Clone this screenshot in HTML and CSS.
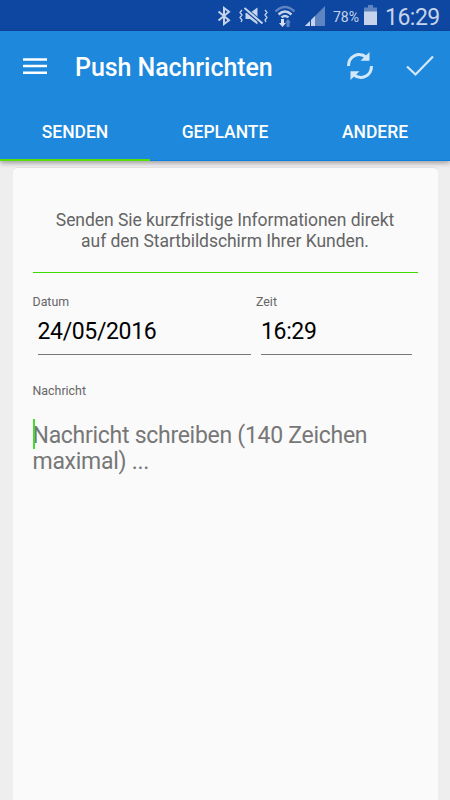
FILE: index.html
```html
<!DOCTYPE html>
<html lang="de">
<head>
<meta charset="utf-8">
<title>Push Nachrichten</title>
<link rel="stylesheet" href="styles.css">
</head>
<body>
<div class="status">
  <svg class="bluetooth" width="14" height="20" viewBox="0 0 14 20"><path d="M1.500 5.500 12 14.200 7 18V2l5 3.800L1.500 14.500" fill="none" stroke="#c6d3ea" stroke-width="2"/></svg>
  <svg class="mute" width="29" height="20" viewBox="0 0 29 20"><path d="M6.500 7h4.500l7.500-5.500v17L11 13H6.500z" fill="#c6d3ea"/><path d="m5 2 19 16" stroke="#0d47a1" stroke-width="4"/><path d="m5.500 2 18 15.500" stroke="#c6d3ea" stroke-width="2"/><path d="M3 4 1 6.500 3 9l-2 2.500L3 14l-1 2M26 4l2 2.500L26 9l2 2.500-2 2.500 1 2" fill="none" stroke="#c6d3ea" stroke-width="1.300"/></svg>
  <svg class="wifi" width="22" height="23" viewBox="0 0 22 23"><path d="M1.500 6.500q9.500-9 19 0" fill="none" stroke="#5e85c1" stroke-width="2.400"/><path d="M4.500 9.500q6.500-6 13 0M7.500 12.400q3.500-3 7 0" fill="none" stroke="#c6d3ea" stroke-width="2.400"/><path d="M7 14h3v4h2l-3.500 4L5 18h2z" fill="#d7e0f0"/><path d="M11 17.500 14 14l3 3.500h-1.500V22h-3v-4.500z" fill="#5e85c1"/></svg>
  <svg class="signal" width="20" height="20" viewBox="0 0 20 20"><path d="M0 20 20 0v20z" fill="#5e85c1"/><path d="M0 20 10 10v10z" fill="#c6d3ea"/><path d="M5.500 14v6" stroke="#0d47a1" stroke-width="1"/></svg>
  <span class="percent">78%</span>
  <svg class="battery" width="13" height="20" viewBox="0 0 13 20"><path d="M4 0h5v2.500h4V7H0V2.500h4z" fill="#5e85c1"/><path d="M0 6.500h13V20H0z" fill="#c6d3ea"/></svg>
  <span class="clock">16:29</span>
</div>
<header class="appbar">
  <div class="toolbar">
    <svg class="menu" width="24" height="16" viewBox="0 0 24 16"><path d="M0 1.500h24M0 8h24M0 14.700h24" stroke="#fff" stroke-width="2.400"/></svg>
    <h1 class="title">Push Nachrichten</h1>
    <svg class="sync" width="26" height="28" viewBox="0 0 26 28"><path d="M1.500 14C1.500 4 12 -1 19.500 5.500M24.500 14c0 10-10.500 15-18 8.500" fill="none" stroke="#d2e7f8" stroke-width="3"/><path d="M22.500 0v8.700h-9zM3.500 28v-8.700h9z" fill="#d2e7f8"/></svg>
    <svg class="check" width="28" height="22" viewBox="0 0 28 22"><path d="m1 11.500 8.500 8L27 1.500" fill="none" stroke="#d2e7f8" stroke-width="2.300"/></svg>
  </div>
  <nav class="tabs">
    <div class="tab active">SENDEN</div>
    <div class="tab">GEPLANTE</div>
    <div class="tab">ANDERE</div>
  </nav>
</header>
<main class="card">
  <p class="intro">Senden Sie kurzfristige Informationen direkt<br>auf den Startbildschirm Ihrer Kunden.</p>
  <div class="when">
    <div class="field date"><div class="label">Datum</div><div class="value">24/05/2016</div></div>
    <div class="field time"><div class="label">Zeit</div><div class="value">16:29</div></div>
  </div>
  <div class="label">Nachricht</div>
  <div class="message">Nachricht schreiben (140 Zeichen<br>maximal) ...</div>
</main>
</body>
</html>
```
FILE: styles.css
```css
* { box-sizing: border-box; }
body {
  margin: 0;
  height: 800px;
  overflow: hidden;
  display: flex;
  flex-direction: column;
  background: #eee;
  font-family: Roboto, sans-serif;
}
svg { display: block; flex: none; }
.status {
  flex: none;
  height: 31px;
  display: flex;
  align-items: flex-start;
  padding: 5px 0 0 217px;
  background: #0d47a1;
  color: #c6d3ea;
}
.bluetooth { margin-top: 1px; }
.mute { margin: 1px 0 0 8px; }
.wifi { margin-left: 6px; }
.signal { margin: 1px 0 0 9px; }
.percent { width: 31px; margin-left: 8px; font-size: 14px; line-height: 24px; }
.clock { margin-left: 8px; font-size: 23px; line-height: 25px; letter-spacing: -.5px; }
.appbar {
  flex: none;
  position: relative;
  height: 130px;
  background: #1e88dc;
  color: #fff;
  box-shadow: 0 2px 5px rgba(0, 0, 0, .35);
}
.toolbar { height: 70px; display: flex; align-items: center; padding: 0 16px 0 23px; }
.title { flex: 1; margin: 4px 0 0 28px; font-size: 25px; font-weight: 500; line-height: 30px; letter-spacing: -.07px; }
.sync { margin-right: 1px; }
.check { margin-left: 32px; }
.tabs { display: flex; height: 60px; }
.tab {
  flex: 1;
  padding-top: 17px;
  text-align: center;
  font-size: 17.500px;
  letter-spacing: -.05px;
  font-weight: 500;
  line-height: 28px;
  border-bottom: 1px solid #0b7fe0;
}
.active { border-bottom: 2px solid #5bdc0b; }
.card {
  flex: 1;
  margin: 6px 12.500px 0;
  padding: 42px 20px 0;
  background: #fafafa;
  border-radius: 5px 5px 0 0;
  border-top: 1px solid #e4e4e4;
}
.intro {
  margin: 0;
  height: 63px;
  border-bottom: 1px solid #3ddc00;
  text-align: center;
  font-size: 17.500px;
  letter-spacing: -.05px;
  line-height: 20.500px;
  color: #656565;
}
.when { display: flex; height: 111px; padding-top: 22px; }
.date { width: 223.500px; }
.time { width: 156px; }
.label { font-size: 12.400px; line-height: 14px; color: #666; }
.value {
  margin: 5px 0 0 5px;
  height: 41px;
  padding-top: 4px;
  border-bottom: 1px solid #777;
  font-size: 23px;
  letter-spacing: -.36px;
  line-height: 28px;
  color: #000;
}
.date .value { width: 213.500px; }
.message {
  position: relative;
  margin-top: 25px;
  font-size: 23px;
  letter-spacing: -.28px;
  line-height: 26px;
  color: #777;
  white-space: nowrap;
}
.message::before {
  content: "";
  position: absolute;
  left: 0;
  top: -4px;
  width: 2px;
  height: 30px;
  background: #45dc2b;
}
```
